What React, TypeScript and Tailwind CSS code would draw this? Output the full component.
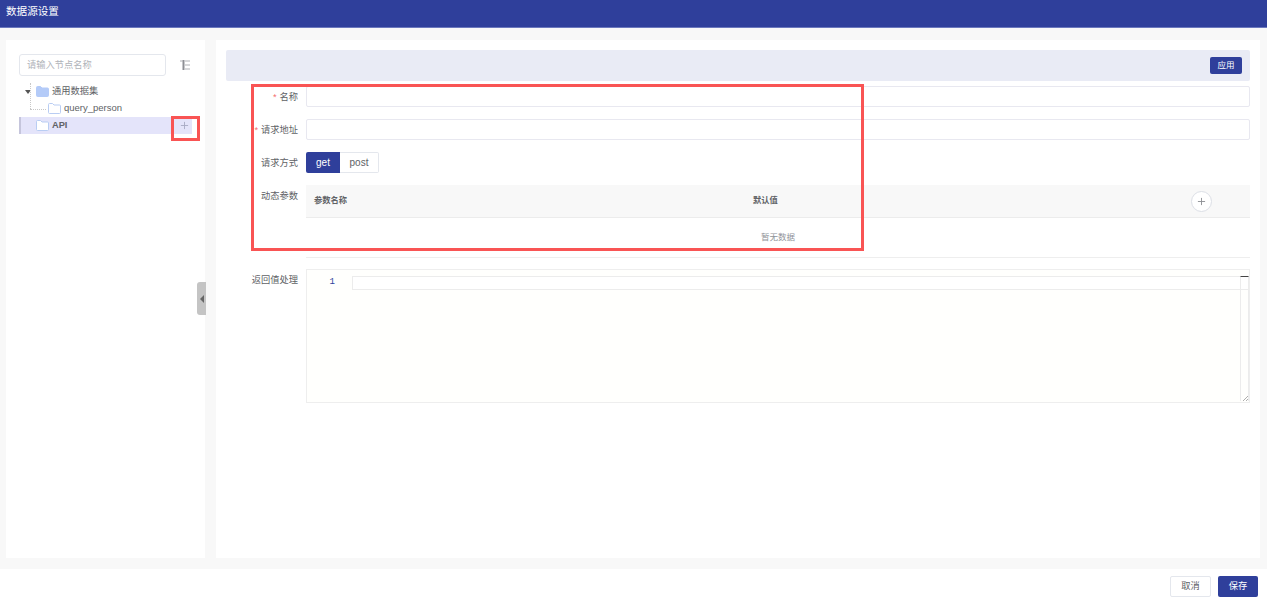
import { Plus } from "lucide-react";

function FolderIcon({ filled }: { filled?: boolean }) {
  return (
    <svg width="13" height="11" viewBox="0 0 13 11" className="shrink-0">
      <path
        d="M0.5 1.5 Q0.5 0.5 1.5 0.5 H4.5 L6 2 H11.5 Q12.5 2 12.5 3 V9.5 Q12.5 10.5 11.5 10.5 H1.5 Q0.5 10.5 0.5 9.5 Z"
        fill={filled ? "#b4cbf8" : "#ffffff"}
        stroke={filled ? "#b4cbf8" : "#b9cdf3"}
      />
    </svg>
  );
}

function CollapseIcon() {
  return (
    <svg width="12" height="12" viewBox="0 0 12 12" className="ml-[13px] shrink-0">
      <path d="M4.5 1 V11" stroke="#8d8f94" strokeWidth="2" />
      <path d="M1 2 H4 M6 2 H11 M6 6 H11 M6 10 H11" stroke="#b0b2b6" strokeWidth="1.2" />
    </svg>
  );
}

function FormRow({ label, required, children }: { label: string; required?: boolean; children: React.ReactNode }) {
  return (
    <div className="flex">
      <label className="w-[72px] shrink-0 pt-px text-right text-[9.25px] leading-[20px] text-[#606266]">
        {required && <span className="mr-[3px] text-[#f56c6c]">*</span>}
        {label}
      </label>
      <div className="ml-2 min-w-0 flex-1">{children}</div>
    </div>
  );
}

function TreePanel() {
  return (
    <aside className="w-[199px] shrink-0 bg-white px-[13px] pt-[14px]">
      <div className="flex items-center">
        <div className="flex h-[22px] w-[147px] items-center rounded-[3px] border border-[#e4e7ed] px-[7px] pt-px text-[9.25px] text-[#b0b3b9]">
          请输入节点名称
        </div>
        <CollapseIcon />
      </div>
      <div className="relative mt-[7px] w-[173px] text-[9.25px] text-[#606266]">
        {/* dotted guide lines of the tree */}
        <div className="absolute left-[11px] top-0 h-[26px] border-l border-dotted border-[#c8c8c8]" />
        <div className="absolute left-[11px] top-[26px] w-[16px] border-t border-dotted border-[#c8c8c8]" />
        <div className="flex h-[17px] items-center pl-[6px]">
          <span className="h-0 w-0 border-x-[3px] border-t-[4px] border-x-transparent border-t-[#555]" />
          <span className="ml-[5px]"><FolderIcon filled /></span>
          <span className="ml-[3px]">通用数据集</span>
        </div>
        <div className="flex h-[17px] items-center pl-[29px]">
          <FolderIcon />
          <span className="ml-[3px] text-[9.5px]">query_person</span>
        </div>
        <div className="flex h-[17px] items-center justify-between border-l-[2px] border-[#c5c5dc] bg-[#e4e4fa] pl-[15px]">
          <div className="flex items-center">
            <FolderIcon />
            <span className="ml-[3px] font-bold">API</span>
          </div>
          <Plus size={11} className="mr-[2px] text-[#a9abc4]" />
        </div>
      </div>
    </aside>
  );
}

function ParamsTable() {
  return (
    <div>
      <div className="flex h-[33px] items-center border-b border-[#ececec] bg-[#f8f8f8] text-[8.25px] font-bold text-[#606266]">
        <span className="ml-2 w-[439px] pt-px">参数名称</span>
        <span className="pt-px">默认值</span>
        <span className="ml-auto mr-[38px] flex h-[21px] w-[21px] items-center justify-center rounded-full border border-[#dcdfe6] bg-white">
          <Plus size={11} className="text-[#8d8f94]" />
        </span>
      </div>
      <div className="pt-[14px] text-center text-[8.5px] leading-[11px] text-[#909399]">暂无数据</div>
    </div>
  );
}

function CodeEditor() {
  return (
    <div className="relative h-[134px] border border-[#eeeeee] bg-[#fffffd]">
      <div className="flex pt-[6px]">
        <div className="w-[45px] shrink-0 pr-[17px] text-right font-['Liberation_Mono'] text-[9px] leading-[13px] text-[#2f3f9b]">1</div>
        <div className="h-[14px] flex-1 border border-[#ececec] bg-white" />
      </div>
      <div className="absolute right-0 top-[6px] h-[125px] w-[9px] border-x border-t border-x-[#ececec] border-t-[#444]" />
      <svg width="7" height="7" viewBox="0 0 7 7" className="absolute bottom-0 right-0">
        <path d="M1 6 L6 1 M4 6 L6 4" stroke="#999" strokeWidth="0.8" />
      </svg>
    </div>
  );
}

export default function App() {
  return (
    <div className="relative flex h-[601px] w-[1267px] flex-col overflow-hidden bg-white font-['Liberation_Sans','Noto_Sans_CJK_SC',sans-serif]">
      <header className="flex h-[28px] shrink-0 items-center border-b border-[#6b78bd] bg-[#2f3f9b] px-[6px] pb-[3px] text-[10.6px] text-white">
        数据源设置
      </header>

      <main className="flex h-[541px] shrink-0 gap-[11px] bg-[#f8f8f8] pt-3 pr-[7px] pb-[11px] pl-[6px]">
        <TreePanel />
        <section className="min-w-0 flex-1 bg-white pt-[10px] pr-[10px] pl-[10px]">
          <div className="flex h-[31px] items-center justify-end rounded-[2px] bg-[#e9ebf5] pr-2">
            <button className="h-[17px] w-[32px] rounded-[2px] bg-[#2f3f9b] text-[8.5px] text-white">应用</button>
          </div>
          <div className="mt-[5px] flex flex-col">
            <FormRow label="名称" required>
              <div className="h-[21px] rounded-[2px] border border-[#e8e8f0] bg-white" />
            </FormRow>
            <div className="mt-3">
              <FormRow label="请求地址" required>
                <div className="h-[21px] rounded-[2px] border border-[#e8e8f0] bg-white" />
              </FormRow>
            </div>
            <div className="mt-3">
              <FormRow label="请求方式">
                <div className="flex h-[21px] text-[10px]">
                  <span className="flex w-[34px] items-center justify-center rounded-l-[2px] bg-[#2f3f9b] text-white">get</span>
                  <span className="flex w-[39px] items-center justify-center rounded-r-[2px] border border-l-0 border-[#e4e7ed] text-[#606266]">post</span>
                </div>
              </FormRow>
            </div>
            <div className="mt-3">
              <FormRow label="动态参数">
                <ParamsTable />
              </FormRow>
            </div>
            <div className="ml-20 mt-[14px] border-t border-[#eeeeee]" />
            <div className="mt-[11px]">
              <FormRow label="返回值处理">
                <CodeEditor />
              </FormRow>
            </div>
          </div>
        </section>
      </main>

      <footer className="flex h-[32px] shrink-0 items-center justify-end gap-[7px] bg-white pt-[2px] pr-[9px] text-[9.25px]">
        <button className="h-[21px] w-[41px] rounded-[2px] border border-[#e4e7ed] pt-px text-[#606266]">取消</button>
        <button className="h-[21px] w-[40px] rounded-[2px] bg-[#2f3f9b] pt-px text-white">保存</button>
      </footer>

      {/* annotations and collapse handle sit over the page */}
      <div className="absolute left-[197px] top-[282px] flex h-[33px] w-[9px] items-center justify-center rounded-l-[3px] bg-[#c4c4c4]">
        <span className="h-0 w-0 border-y-[4px] border-r-[4px] border-y-transparent border-r-[#666]" />
      </div>
      <div className="absolute left-[251px] top-[84px] h-[167px] w-[613px] border-[3px] border-[#f95454]" />
      <div className="absolute left-[171px] top-[116px] h-[25px] w-[29px] border-[3px] border-[#f95454]" />
    </div>
  );
}
